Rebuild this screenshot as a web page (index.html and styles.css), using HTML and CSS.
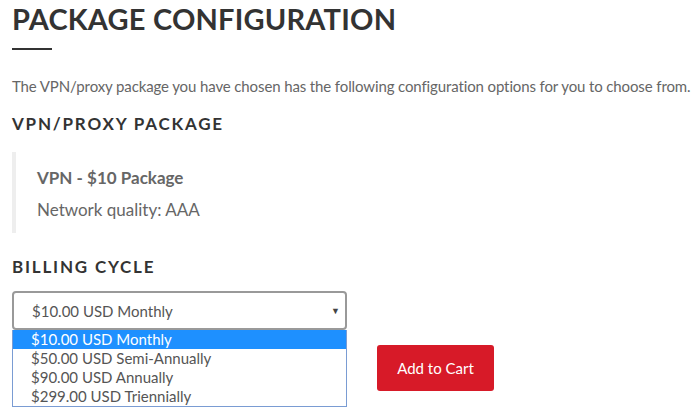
FILE: index.html
```html
<!DOCTYPE html>
<html>
<head>
<meta charset="utf-8">
<link rel="stylesheet" href="styles.css">
</head>
<body>
<div class="page">
  <h1 class="title">PACKAGE CONFIGURATION</h1>
  <div class="rule"></div>
  <p class="intro">The VPN/proxy package you have chosen has the following configuration options for you to choose from.</p>
  <h2 class="section">VPN/PROXY PACKAGE</h2>
  <div class="quote">
    <div class="pkg-name">VPN - $10 Package</div>
    <div class="pkg-desc">Network quality: AAA</div>
  </div>
  <h2 class="section billing">BILLING CYCLE</h2>
  <div class="row">
    <div class="select-wrap">
      <div class="select">
        <span>$10.00 USD Monthly</span>
        <span class="arrow">▼</span>
      </div>
      <ul class="dropdown">
        <li class="active">$10.00 USD Monthly</li>
        <li>$50.00 USD Semi-Annually</li>
        <li>$90.00 USD Annually</li>
        <li>$299.00 USD Triennially</li>
      </ul>
    </div>
    <button class="btn">Add to Cart</button>
  </div>
</div>
</body>
</html>
```
FILE: styles.css
```css
html, body { margin: 0; padding: 0; background: #fff; }
body { font-family: Lato, "Open Sans", sans-serif; color: #555; min-height: 100vh; }
.page { padding: 0 12px 30px; }
.title {
  margin: 0;
  padding-top: 2px;
  font-family: Lato, sans-serif;
  font-weight: 700;
  font-size: 29px;
  line-height: 34px;
  letter-spacing: 0.2px;
  color: #333;
}
.rule { width: 40px; height: 2px; background: #333; margin-top: 12px; }
.intro {
  margin: 26px 0 0;
  font-size: 15px;
  line-height: 20px;
  color: #666;
  letter-spacing: -0.12px;
  white-space: nowrap;
}
.section {
  margin: 0;
  font-family: Lato, sans-serif;
  font-weight: 700;
  font-size: 17px;
  line-height: 20px;
  letter-spacing: 1.8px;
  color: #333;
  margin-top: 18px;
}
.quote {
  margin-top: 18px;
  border-left: 4px solid #eee;
  padding: 14px 0 12px 21px;
  height: 55px;
}
.pkg-name { font-size: 17px; font-weight: 700; color: #666; line-height: 24px; }
.pkg-desc { font-size: 17px; color: #666; line-height: 24px; margin-top: 8px; }
.billing { margin-top: 24px; }
.row { display: flex; align-items: flex-start; margin-top: 14px; }
.select-wrap { position: relative; width: 335px; }
.select {
  box-sizing: border-box;
  height: 39px;
  border: 2px solid #999;
  border-radius: 4px;
  display: flex;
  align-items: center;
  justify-content: space-between;
  padding: 0 5px 0 18px;
  font-size: 15px;
  color: #555;
}
.arrow { font-size: 9px; color: #444; }
.dropdown {
  position: absolute;
  left: 0; top: 39px;
  box-sizing: border-box;
  width: 335px;
  margin: 0; padding: 0;
  list-style: none;
  border: 1px solid #7a9cd3;
  border-top: none;
  background: #fff;
}
.dropdown li {
  height: 19px;
  line-height: 19px;
  padding-left: 18px;
  font-size: 15px;
  color: #555;
}
.dropdown li.active { background: #1e90ff; color: #fff; }
.btn {
  margin: 54px 0 0 30px;
  width: 117px;
  height: 46px;
  border: none;
  border-radius: 3px;
  background: #d71a28;
  color: #fff;
  font-family: Lato, sans-serif;
  font-size: 15px;
  padding: 0;
}
```
